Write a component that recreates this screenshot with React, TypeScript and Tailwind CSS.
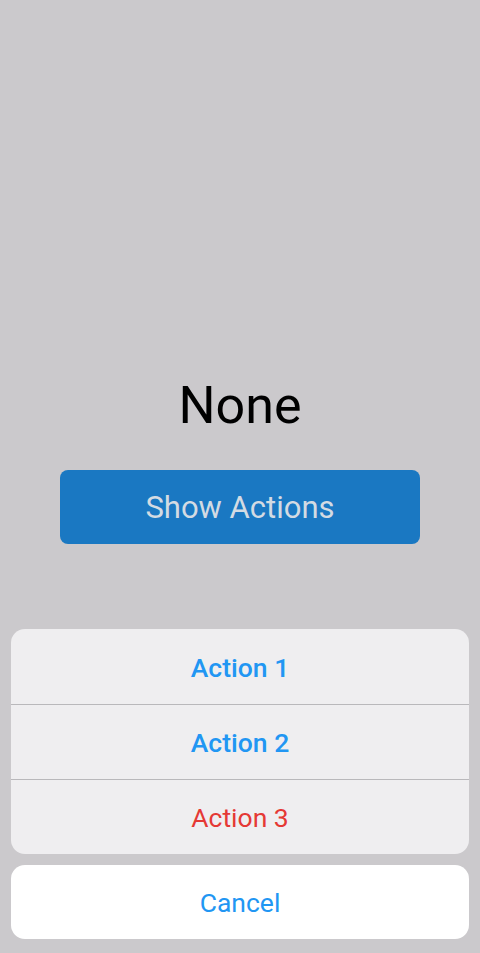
import { useState } from "react";

const actions = [
  { label: "Action 1", className: "text-[#2196f3] font-medium" },
  { label: "Action 2", className: "text-[#2196f3] font-medium" },
  { label: "Action 3", className: "text-[#e53935] font-normal" },
];

export default function App() {
  const [selected, setSelected] = useState("None");

  return (
    <div className="flex h-[953px] w-full flex-col bg-[#cbc9cc] font-['Roboto',sans-serif]">
      {/* MAIN CONTENT */}
      <div className="flex flex-1 flex-col items-center pt-[374px]">
        <div className="text-[52px] leading-[64px] text-black">{selected}</div>
        <button className="mt-[32px] flex h-[74px] w-[360px] items-center justify-center rounded-[8px] bg-[#1a78c2] pt-[2px] text-[31px] text-[#d3dbe3]">
          Show Actions
        </button>
      </div>

      {/* ACTION SHEET */}
      <div className="flex flex-col gap-[11px] px-[11px] pb-[14px]">
        <div className="overflow-hidden rounded-[14px] bg-[#efeef0]">
          {actions.map((a, i) => (
            <button
              key={a.label}
              onClick={() => setSelected(a.label)}
              className={
                "flex h-[75px] w-full items-center justify-center pt-[2px] text-[26.5px] " +
                a.className +
                (i > 0 ? " border-t border-[#b9b8bb]" : "")
              }
            >
              {a.label}
            </button>
          ))}
        </div>
        <button
          onClick={() => setSelected("None")}
          className="flex h-[74px] w-full items-center justify-center rounded-[14px] bg-white pt-[2px] text-[26.5px] text-[#2196f3]"
        >
          Cancel
        </button>
      </div>
    </div>
  );
}
